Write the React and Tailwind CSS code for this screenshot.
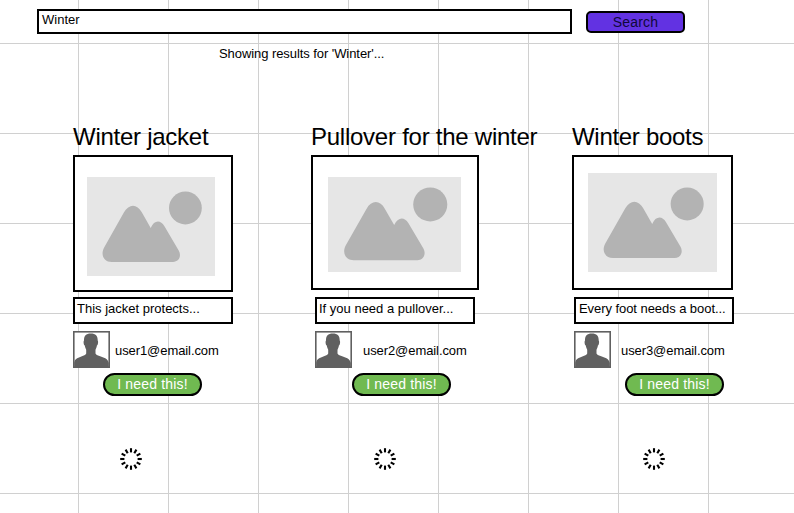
import React from "react";

const cards = [
  {
    title: "Winter jacket", titleClass: "tracking-[-0.26px]", text: "This jacket protects...", email: "user1@email.com",
    column: "w-[238px]",
    frame: "w-[160px] h-[137px] pl-[12px] pt-[20px]",
    image: "w-[128px] h-[99px]", viewBox: "0 0 128 99",
    field: "mt-[5px]", offset: "", textInset: "pl-[2px]", emailGap: "ml-[5px]", button: "ml-[30px]", spinner: "ml-[47px]",
  },
  {
    title: "Pullover for the winter", titleClass: "tracking-[-0.25px]", text: "If you need a pullover...", email: "user2@email.com",
    column: "w-[261px]",
    frame: "w-[168px] h-[135px] pl-[15px] pt-[20px]",
    image: "w-[133px] h-[95px]", viewBox: "0 4.4 128 92",
    field: "mt-[7px]", offset: "pl-[4px]", textInset: "pl-[2px]", emailGap: "ml-[11px]", button: "ml-[41px]", spinner: "ml-[63px]",
  },
  {
    title: "Winter boots", titleClass: "tracking-[-0.3px]", text: "Every foot needs a boot...", email: "user3@email.com",
    column: "w-[222px]",
    frame: "w-[161px] h-[135px] pl-[14px] pt-[16px]",
    image: "w-[129px] h-[99px]", viewBox: "0 0 128 99",
    field: "mt-[7px]", offset: "pl-[2px]", textInset: "pl-[3px] tracking-[-0.06px]", emailGap: "ml-[10px]", button: "ml-[53px]", spinner: "ml-[71px]",
  },
];

function Placeholder({ className, viewBox }) {
  return (
    <svg className={className} viewBox={viewBox} preserveAspectRatio="none">
      <rect width="128" height="99" fill="#e6e6e6" />
      <circle cx="98.4" cy="31" r="16.4" fill="#b3b3b3" />
      <path
        d="M37 35.3C42 26.5 50 26.5 54.8 35.3L63.7 51C67 43 73.5 42.5 77.3 49L91.7 73.5C95 79.5 91.5 85 86 85H24.7C17 85 13.3 78 17 70.7Z"
        fill="#b3b3b3"
      />
    </svg>
  );
}

function Avatar() {
  return (
    <svg className="h-[37px] w-[37px] shrink-0" viewBox="0 0 37 37">
      <rect x="0.8" y="0.8" width="35.4" height="35.4" fill="#fff" stroke="#606060" strokeWidth="1.6" />
      <path
        d="M17.8 2.5C13 2.5 10.8 5 11 9.5C10.2 10.3 10.6 14 11.8 14.6C12 16.2 12.6 17.7 13.2 18.7V22.6C12.8 23.8 11.5 24.4 9.5 25L4.2 27.2C2 28.2 1.2 30.7 1.2 32V36H35.8V32C35.5 30.7 34.5 28.2 32.3 27.2L26.5 25C24.5 24.4 22.9 23.8 22.5 22.6V18.7C23.1 17.7 23.7 16.2 23.9 14.6C25.1 14 25.5 10.3 24.7 9.5C24.9 5 22.6 2.5 17.8 2.5Z"
        fill="#606060"
      />
    </svg>
  );
}

function Spinner() {
  return (
    <svg className="h-[22px] w-[22px]" viewBox="-11 -11 22 22">
      {Array.from({ length: 12 }, (_, i) => (
        <line key={i} y1="-10.8" y2="-6.6" stroke="#000" strokeWidth="2.1" transform={`rotate(${i * 30})`} />
      ))}
    </svg>
  );
}

function Card({ card }) {
  return (
    <article className={`flex shrink-0 flex-col ${card.column}`}>
      <h2 className={`h-[32px] text-2xl leading-[28px] whitespace-nowrap ${card.titleClass}`}>{card.title}</h2>
      <div className={`border-2 border-black bg-white ${card.frame}`}>
        <Placeholder className={card.image} viewBox={card.viewBox} />
      </div>
      <div className={card.offset}>
        <div className={`h-[27px] w-[160px] border-2 border-black bg-white text-[13px] leading-[19px] whitespace-nowrap ${card.textInset} ${card.field}`}>
          {card.text}
        </div>
        <div className="mt-[7px] flex items-center">
          <Avatar />
          <span className={`pt-[2px] text-[13px] leading-[19px] tracking-[-0.08px] ${card.emailGap}`}>{card.email}</span>
        </div>
      </div>
      <button className={`mt-[5px] h-[23px] w-[99px] rounded-full border-2 border-black bg-[#70ba51] text-sm leading-[19px] tracking-[0.17px] whitespace-nowrap text-white ${card.button}`}>
        I need this!
      </button>
      <div className={`mt-[52px] ${card.spinner}`}>
        <Spinner />
      </div>
    </article>
  );
}

export default function App() {
  return (
    <main className="h-[513px] w-[794px] overflow-hidden bg-white bg-[linear-gradient(to_right,#d0d0d0_1px,transparent_1px),linear-gradient(to_bottom,#d0d0d0_1px,transparent_1px)] bg-[size:90px_90px] bg-[position:78px_43px] font-['Liberation_Sans',Arial,sans-serif] text-black">
      <header className="flex items-start pt-[9px] pl-[37px]">
        <div className="h-[25px] w-[535px] border-2 border-black bg-white pl-[3px] text-[13px] leading-[18px]">Winter</div>
        <button className="mt-[2px] ml-[14px] h-[22px] w-[99px] rounded-[5px] border-2 border-black bg-[#6232e2] text-sm leading-[16px] tracking-[0.15px] text-[#10083a]">Search</button>
      </header>
      <p className="mt-[10px] h-[79px] pl-[219px] text-[13px] leading-[19px] tracking-[-0.07px]">Showing results for 'Winter'...</p>
      <section className="flex items-start pl-[73px]">
        {cards.map((card) => (
          <Card key={card.title} card={card} />
        ))}
      </section>
    </main>
  );
}
